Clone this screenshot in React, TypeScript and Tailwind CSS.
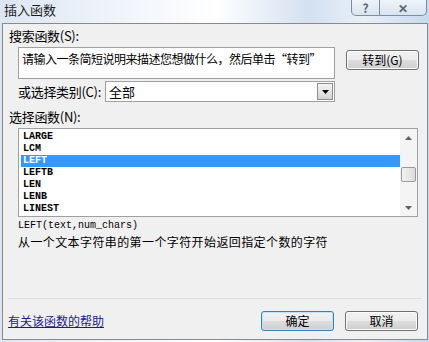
import React from "react";

const cjk = "font-['Noto_Sans_CJK_SC','Noto_Sans',sans-serif]";
const mono = "font-['Liberation_Mono','DejaVu_Sans_Mono',monospace]";

const functions = ["LARGE", "LCM", "LEFT", "LEFTB", "LEN", "LENB", "LINEST"];

function WinButton({ label, focused }: { label: string; focused?: boolean }) {
  return (
    <div
      className={`flex h-[20px] w-[73px] items-center justify-center rounded-[3px] border text-[12px] leading-none text-black ${
        focused
          ? "border-[#3c7fb1] shadow-[inset_0_0_0_1px_#bfe4f7]"
          : "border-[#707070] shadow-[inset_0_0_0_1px_#fcfcfc]"
      } bg-[linear-gradient(#f2f2f2_0%,#ebebeb_50%,#dddddd_51%,#cfcfcf_100%)]`}
    >
      {label}
    </div>
  );
}

export default function App() {
  return (
    <div
      className={`h-[342px] w-[429px] overflow-hidden bg-[linear-gradient(90deg,#dce6f3_0%,#eef3fa_25%,#ffffff_50%,#d3e1f0_72%,#e8f0f8_85%,#c6d9ed_100%)] ${cjk}`}
    >
      {/* title bar */}
      <div className="flex h-[23px] items-start justify-between">
        <div className="pl-[4px] pt-[2px] text-[13px] leading-[16px] text-[#1e1e1e]">插入函数</div>
        <div className="mr-[2px] flex h-[16px] overflow-hidden rounded-b-[5px] border border-t-0 border-[#7b8ea6] bg-[linear-gradient(#eef3f9,#d9e4f0)]">
          <div className="flex w-[28px] items-center justify-center border-r border-[#7b8ea6] text-[12px] font-bold leading-none text-[#5a6677]">
            ?
          </div>
          <div className="flex w-[46px] items-center justify-center text-[12px] font-bold leading-none text-[#5a6677]">
            ✕
          </div>
        </div>
      </div>

      {/* dialog body */}
      <div className="ml-[2px] mr-[1px] flex h-[317px] flex-col border border-[#8a8a8a] bg-[#f0f0f0] text-[12px] text-black">
        <div className="ml-[6px] mt-[4px] h-[16px] text-[13px] leading-[16px] tracking-[-0.3px]">搜索函数(S):</div>

        <div className="mt-[3px] flex items-start">
          <div className="ml-[15px] h-[32px] w-[317px] border border-[#a0a0a0] bg-white px-[3px] pt-[4px] text-[12px] leading-[14px] tracking-[-0.5px]">
            请输入一条简短说明来描述您想做什么，然后单击“转到”
          </div>
          <div className="ml-[11px] mt-[3px]">
            <WinButton label="转到(G)" />
          </div>
        </div>

        <div className="mt-[2px] flex items-center">
          <div className="ml-[15px] w-[87px] text-[13px] leading-[16px] tracking-[-0.3px]">或选择类别(C):</div>
          <div className="flex h-[21px] w-[230px] items-center justify-between border border-[#a0a0a0] bg-white pl-[3px] pr-[1px]">
            <span className="text-[13px] leading-none">全部</span>
            <div className="flex h-[17px] w-[16px] items-center justify-center border border-[#8c8c8c] bg-[linear-gradient(#f4f4f4,#d4d4d4)]">
              <svg width="7" height="4" viewBox="0 0 7 4">
                <path d="M0 0h7L3.5 4z" fill="#000" />
              </svg>
            </div>
          </div>
        </div>

        <div className="ml-[6px] mt-[7px] h-[16px] text-[13px] leading-[16px] tracking-[-0.3px]">选择函数(N):</div>

        {/* list box */}
        <div className="ml-[15px] mt-[3px] flex h-[89px] w-[400px] border border-[#a0a0a0] bg-white">
          <div className={`flex-1 pl-[2px] pt-[2px] ${mono}`}>
            {functions.map((f) => (
              <div
                key={f}
                className={`h-[12px] pl-[2px] text-[10px] font-bold leading-[12px] ${
                  f === "LEFT" ? "bg-[#3399ff] text-white" : "text-black"
                }`}
              >
                {f}
              </div>
            ))}
          </div>
          <div className="flex w-[17px] flex-col items-center bg-[#f4f4f4]">
            <div className="flex h-[17px] items-center justify-center">
              <svg width="7" height="4" viewBox="0 0 7 4">
                <path d="M3.5 0L7 4H0z" fill="#606060" />
              </svg>
            </div>
            <div className="mt-[21px] h-[15px] w-[15px] rounded-[2px] border border-[#9a9a9a] bg-[linear-gradient(90deg,#f3f3f3,#dcdcdc)]" />
            <div className="mt-auto flex h-[17px] items-center justify-center">
              <svg width="7" height="4" viewBox="0 0 7 4">
                <path d="M0 0h7L3.5 4z" fill="#606060" />
              </svg>
            </div>
          </div>
        </div>

        <div className={`ml-[15px] mt-[3px] h-[12px] text-[10px] leading-[12px] ${mono}`}>
          LEFT(text,num_chars)
        </div>
        <div className="ml-[15px] mt-[2px] h-[16px] text-[12px] leading-[16px] tracking-[0.4px]">
          从一个文本字符串的第一个字符开始返回指定个数的字符
        </div>

        <div className="mx-[5px] mt-[48px] h-px bg-[#dcdcdc]" />

        <div className="mt-[12px] flex items-center">
          <a className="ml-[5px] text-[12px] leading-[16px] text-[#1b1b8f] underline">有关该函数的帮助</a>
          <div className="ml-auto mr-[9px] flex gap-[11px]">
            <WinButton label="确定" focused />
            <WinButton label="取消" />
          </div>
        </div>
      </div>
    </div>
  );
}
